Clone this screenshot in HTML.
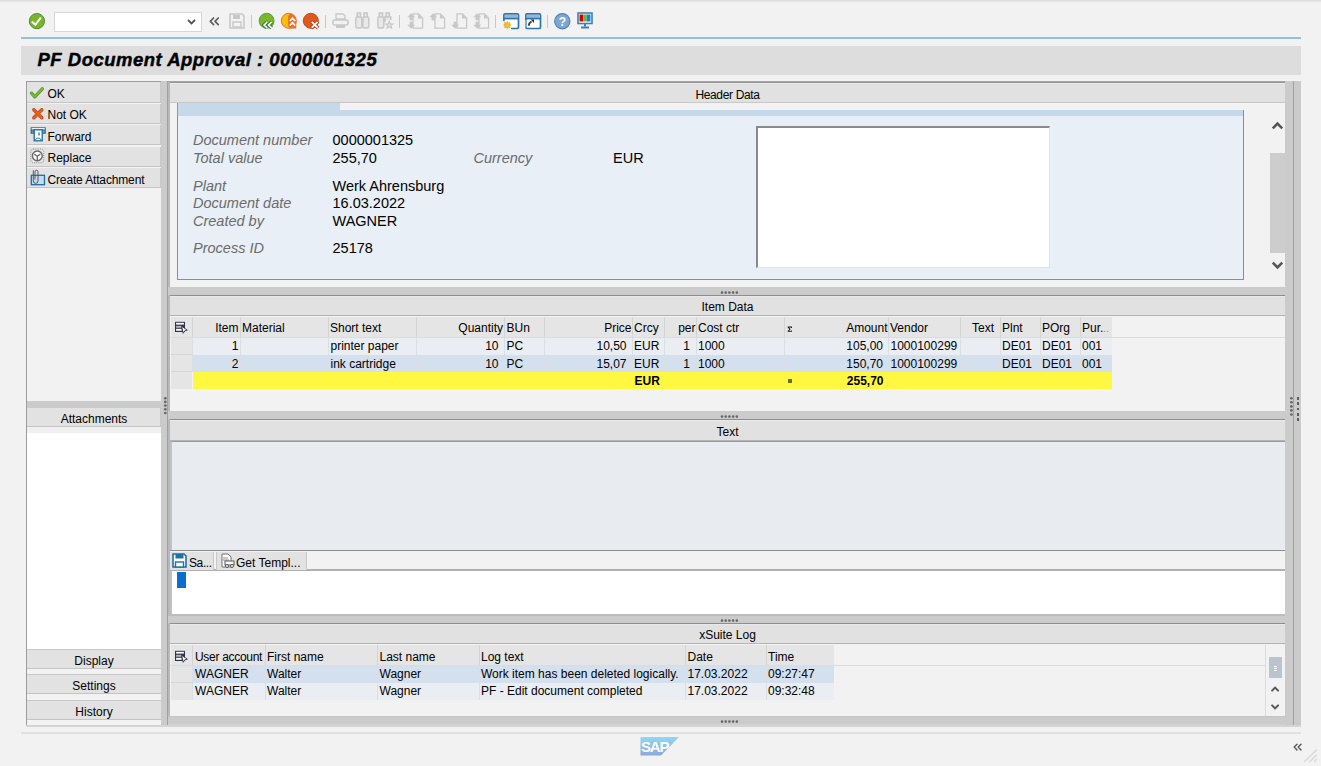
<!DOCTYPE html>
<html><head><meta charset="utf-8"><style>
html,body{margin:0;padding:0;}
body{width:1321px;height:766px;overflow:hidden;position:relative;background:#f2f2f2;font-family:"Liberation Sans",sans-serif;}
.a{position:absolute;}
.t{position:absolute;white-space:pre;}
svg{overflow:visible;}
</style></head><body>
<div class="a" style="left:0px;top:0px;width:1321px;height:1px;background:#dcdcdc;"></div>
<div class="a" style="left:0px;top:1px;width:1321px;height:2px;background:linear-gradient(#e6e6e6,#f2f2f2);"></div>
<div class="a" style="left:21px;top:37px;width:1280px;height:2px;background:#92c2e2;"></div>
<div class="a" style="left:21px;top:46px;width:1280px;height:29px;background:#dddddd;"></div>
<div class="t" style="top:51.34px;font-size:18.5px;line-height:18.5px;color:#000;font-weight:bold;font-style:italic;letter-spacing:0.5px;left:37.5px;-webkit-text-stroke:0.45px #000;">PF Document Approval : 0000001325</div>
<div class="a" style="left:26px;top:81px;width:135px;height:644px;background:#f2f2f2;border-left:1px solid #9c9c9c;border-top:1px solid #9c9c9c;box-sizing:border-box;"></div>
<div class="a" style="left:27px;top:82px;width:134px;height:21px;background:#e2e2e2;border-bottom:1px solid #c4c4c4;border-right:1px solid #c8c8c8;box-sizing:border-box;"></div>
<div class="t" style="top:87.84px;font-size:12px;line-height:12px;color:#000;left:47.5px;">OK</div>
<div class="a" style="left:27px;top:104px;width:134px;height:20px;background:#e2e2e2;border-bottom:1px solid #c4c4c4;border-right:1px solid #c8c8c8;box-sizing:border-box;"></div>
<div class="t" style="top:109.34px;font-size:12px;line-height:12px;color:#000;left:47.5px;">Not OK</div>
<div class="a" style="left:27px;top:125px;width:134px;height:20px;background:#e2e2e2;border-bottom:1px solid #c4c4c4;border-right:1px solid #c8c8c8;box-sizing:border-box;"></div>
<div class="t" style="top:130.84px;font-size:12px;line-height:12px;color:#000;left:47.5px;">Forward</div>
<div class="a" style="left:27px;top:147px;width:134px;height:20px;background:#e2e2e2;border-bottom:1px solid #c4c4c4;border-right:1px solid #c8c8c8;box-sizing:border-box;"></div>
<div class="t" style="top:152.34px;font-size:12px;line-height:12px;color:#000;left:47.5px;">Replace</div>
<div class="a" style="left:27px;top:168px;width:134px;height:20px;background:#e2e2e2;border-bottom:1px solid #c4c4c4;border-right:1px solid #c8c8c8;box-sizing:border-box;"></div>
<div class="t" style="top:173.84px;font-size:12px;line-height:12px;color:#000;letter-spacing:-0.15px;left:47.5px;">Create Attachment</div>
<div class="a" style="left:27px;top:401px;width:134px;height:7px;background:#cbcbcb;"></div>
<div class="a" style="left:27px;top:408px;width:134px;height:19px;background:#e2e2e2;border-bottom:1px solid #c4c4c4;border-right:1px solid #c8c8c8;box-sizing:border-box;"></div>
<div class="t" style="top:412.84px;font-size:12px;line-height:12px;color:#000;left:-506px;width:1200px;text-align:center;">Attachments</div>
<div class="a" style="left:27px;top:427px;width:134px;height:6px;background:#f0f0f0;"></div>
<div class="a" style="left:27px;top:433px;width:134px;height:216px;background:#ffffff;"></div>
<div class="a" style="left:27px;top:649px;width:134px;height:20px;background:#e2e2e2;border-top:1px solid #c8c8c8;border-bottom:1px solid #c4c4c4;box-sizing:border-box;"></div>
<div class="t" style="top:654.84px;font-size:12px;line-height:12px;color:#000;left:-506px;width:1200px;text-align:center;">Display</div>
<div class="a" style="left:27px;top:674px;width:134px;height:20px;background:#e2e2e2;border-top:1px solid #c8c8c8;border-bottom:1px solid #c4c4c4;box-sizing:border-box;"></div>
<div class="t" style="top:679.84px;font-size:12px;line-height:12px;color:#000;left:-506px;width:1200px;text-align:center;">Settings</div>
<div class="a" style="left:27px;top:700px;width:134px;height:20px;background:#e2e2e2;border-top:1px solid #c8c8c8;border-bottom:1px solid #c4c4c4;box-sizing:border-box;"></div>
<div class="t" style="top:705.84px;font-size:12px;line-height:12px;color:#000;left:-506px;width:1200px;text-align:center;">History</div>
<div class="a" style="left:26px;top:725px;width:135px;height:2px;background:#d4d4d4;"></div>
<div class="a" style="left:161px;top:81px;width:6px;height:645px;background:#cbcbcb;"></div>
<div class="a" style="left:167px;top:81px;width:1px;height:645px;background:#a0a0a0;"></div>
<svg class="a" style="left:163px;top:396px" width="5" height="21"><ellipse cx="2.3" cy="2.2" rx="1.35" ry="1.3" fill="#666"/><ellipse cx="2.3" cy="5.9" rx="1.35" ry="1.3" fill="#666"/><ellipse cx="2.3" cy="9.6" rx="1.35" ry="1.3" fill="#666"/><ellipse cx="2.3" cy="13.3" rx="1.35" ry="1.3" fill="#666"/><ellipse cx="2.3" cy="17.0" rx="1.35" ry="1.3" fill="#666"/></svg>
<div class="a" style="left:1285px;top:81px;width:8px;height:645px;background:#cbcbcb;"></div>
<div class="a" style="left:1293px;top:81px;width:1px;height:645px;background:#a0a0a0;"></div>
<div class="a" style="left:1294px;top:81px;width:7px;height:645px;background:#cbcbcb;"></div>
<svg class="a" style="left:1289px;top:396px" width="5" height="21"><ellipse cx="2.4" cy="2.3" rx="1.35" ry="1.3" fill="#666"/><ellipse cx="2.4" cy="6.3" rx="1.35" ry="1.3" fill="#666"/><ellipse cx="2.4" cy="10.4" rx="1.35" ry="1.3" fill="#666"/><ellipse cx="2.4" cy="14.4" rx="1.35" ry="1.3" fill="#666"/><ellipse cx="2.4" cy="18.5" rx="1.35" ry="1.3" fill="#666"/></svg>
<div class="a" style="left:1296.5px;top:397.0px;width:2.5px;height:2.5px;background:#5e5e5e;"></div>
<div class="a" style="left:1296.5px;top:402.35px;width:2.5px;height:2.5px;background:#5e5e5e;"></div>
<div class="a" style="left:1296.5px;top:407.7px;width:2.5px;height:2.5px;background:#5e5e5e;"></div>
<div class="a" style="left:1296.5px;top:413.05px;width:2.5px;height:2.5px;background:#5e5e5e;"></div>
<div class="a" style="left:1296.5px;top:418.4px;width:2.5px;height:2.5px;background:#5e5e5e;"></div>
<div class="a" style="left:168px;top:81px;width:1117px;height:206px;background:#f2f2f2;"></div>
<div class="a" style="left:168px;top:81px;width:1117px;height:1px;background:#a4a4a4;"></div>
<div class="a" style="left:168px;top:82px;width:1117px;height:1px;background:#989898;"></div>
<div class="a" style="left:168px;top:83px;width:1117px;height:1px;background:#e8e8e8;"></div>
<div class="a" style="left:168px;top:82px;width:2px;height:644px;background:#b8b8b8;"></div>
<div class="a" style="left:170px;top:84px;width:1115px;height:19px;background:#e1e1e1;border-bottom:1px solid #c8c8c8;box-sizing:border-box;"></div>
<div class="t" style="top:88.84px;font-size:12px;line-height:12px;color:#000;letter-spacing:-0.35px;left:127.5px;width:1200px;text-align:center;">Header Data</div>
<div class="a" style="left:177px;top:103px;width:1067px;height:177px;background:#e8eff7;border:1px solid #6196d4;border-top:none;box-sizing:border-box;"></div>
<div class="a" style="left:177px;top:103px;width:163px;height:13px;background:#c5d9ea;border-left:1px solid #6a9fd6;box-sizing:border-box;"></div>
<div class="a" style="left:340px;top:103px;width:904px;height:7px;background:#f2f2f2;"></div>
<div class="a" style="left:340px;top:110px;width:904px;height:6px;background:#c5d9ea;"></div>
<div class="a" style="left:1243px;top:110px;width:1px;height:170px;background:#6196d4;"></div>
<div class="t" style="top:132.73px;font-size:14.5px;line-height:14.5px;color:#6b6b6b;font-style:italic;left:193px;">Document number</div>
<div class="t" style="top:150.73px;font-size:14.5px;line-height:14.5px;color:#6b6b6b;font-style:italic;left:193px;">Total value</div>
<div class="t" style="top:178.73px;font-size:14.5px;line-height:14.5px;color:#6b6b6b;font-style:italic;left:193px;">Plant</div>
<div class="t" style="top:195.73px;font-size:14.5px;line-height:14.5px;color:#6b6b6b;font-style:italic;left:193px;">Document date</div>
<div class="t" style="top:213.73px;font-size:14.5px;line-height:14.5px;color:#6b6b6b;font-style:italic;left:193px;">Created by</div>
<div class="t" style="top:240.73px;font-size:14.5px;line-height:14.5px;color:#6b6b6b;font-style:italic;left:193px;">Process ID</div>
<div class="t" style="top:132.73px;font-size:14.5px;line-height:14.5px;color:#000;left:332.5px;">0000001325</div>
<div class="t" style="top:150.73px;font-size:14.5px;line-height:14.5px;color:#000;left:332.5px;">255,70</div>
<div class="t" style="top:178.73px;font-size:14.5px;line-height:14.5px;color:#000;left:332.5px;">Werk Ahrensburg</div>
<div class="t" style="top:195.73px;font-size:14.5px;line-height:14.5px;color:#000;left:332.5px;">16.03.2022</div>
<div class="t" style="top:213.73px;font-size:14.5px;line-height:14.5px;color:#000;left:332.5px;">WAGNER</div>
<div class="t" style="top:240.73px;font-size:14.5px;line-height:14.5px;color:#000;left:332.5px;">25178</div>
<div class="t" style="top:150.73px;font-size:14.5px;line-height:14.5px;color:#6b6b6b;font-style:italic;left:473.5px;">Currency</div>
<div class="t" style="top:150.73px;font-size:14.5px;line-height:14.5px;color:#000;left:613px;">EUR</div>
<div class="a" style="left:756px;top:126px;width:294px;height:142px;background:#ffffff;border-top:2px solid #8a8a8a;border-left:2px solid #8a8a8a;border-right:1px solid #e2e2e2;border-bottom:1px solid #e2e2e2;box-sizing:border-box;"></div>
<div class="a" style="left:1270px;top:153px;width:15px;height:100px;background:#cdcdcd;"></div>
<svg class="a" style="left:1271px;top:120px" width="13" height="10"><path d="M1.8 8.3 L6.5 3.6 L11.2 8.3" stroke="#555" stroke-width="2.6" fill="none"/></svg>
<svg class="a" style="left:1271px;top:261px" width="13" height="10"><path d="M1.8 1.7 L6.5 6.4 L11.2 1.7" stroke="#555" stroke-width="2.6" fill="none"/></svg>
<div class="a" style="left:168px;top:287px;width:1117px;height:8px;background:#cbcbcb;"></div>
<svg class="a" style="left:720px;top:291px" width="20" height="4"><ellipse cx="2.0" cy="1.6" rx="1.25" ry="1.4" fill="#666"/><ellipse cx="5.7" cy="1.6" rx="1.25" ry="1.4" fill="#666"/><ellipse cx="9.4" cy="1.6" rx="1.25" ry="1.4" fill="#666"/><ellipse cx="13.1" cy="1.6" rx="1.25" ry="1.4" fill="#666"/><ellipse cx="16.8" cy="1.6" rx="1.25" ry="1.4" fill="#666"/></svg>
<div class="a" style="left:170px;top:295px;width:1115px;height:1px;background:#8e8e8e;"></div>
<div class="a" style="left:170px;top:296px;width:1115px;height:1px;background:#e9e9e9;"></div>
<div class="a" style="left:170px;top:297px;width:1115px;height:19px;background:#e1e1e1;border-bottom:1px solid #b4b4b4;box-sizing:border-box;"></div>
<div class="t" style="top:301.34px;font-size:12px;line-height:12px;color:#000;left:127.5px;width:1200px;text-align:center;">Item Data</div>
<div class="a" style="left:170px;top:316px;width:1115px;height:95px;background:#f2f2f2;"></div>
<div class="a" style="left:171px;top:317px;width:941px;height:20px;background:#e5e5e5;"></div>
<div class="a" style="left:170px;top:337px;width:1115px;height:1px;background:#dcdcdc;"></div>
<div class="a" style="left:171px;top:338px;width:21px;height:51px;background:#e5e5e5;"></div>
<div class="a" style="left:171px;top:354px;width:21px;height:1px;background:#d6d6d6;"></div>
<div class="a" style="left:171px;top:371px;width:21px;height:1px;background:#d6d6d6;"></div>
<div class="a" style="left:193px;top:338px;width:919px;height:17px;background:#eaedf1;"></div>
<div class="a" style="left:193px;top:355px;width:919px;height:17px;background:#d5e0ef;"></div>
<div class="a" style="left:193px;top:372px;width:919px;height:17px;background:#fff740;"></div>
<div class="a" style="left:192px;top:317px;width:1px;height:20px;background:#d4d4d4;"></div>
<div class="a" style="left:192px;top:338px;width:1px;height:34px;background:#dadfe6;"></div>
<div class="a" style="left:240px;top:317px;width:1px;height:20px;background:#d4d4d4;"></div>
<div class="a" style="left:240px;top:338px;width:1px;height:34px;background:#dadfe6;"></div>
<div class="a" style="left:328px;top:317px;width:1px;height:20px;background:#d4d4d4;"></div>
<div class="a" style="left:328px;top:338px;width:1px;height:34px;background:#dadfe6;"></div>
<div class="a" style="left:416px;top:317px;width:1px;height:20px;background:#d4d4d4;"></div>
<div class="a" style="left:416px;top:338px;width:1px;height:34px;background:#dadfe6;"></div>
<div class="a" style="left:504px;top:317px;width:1px;height:20px;background:#d4d4d4;"></div>
<div class="a" style="left:504px;top:338px;width:1px;height:34px;background:#dadfe6;"></div>
<div class="a" style="left:544px;top:317px;width:1px;height:20px;background:#d4d4d4;"></div>
<div class="a" style="left:544px;top:338px;width:1px;height:34px;background:#dadfe6;"></div>
<div class="a" style="left:632px;top:317px;width:1px;height:20px;background:#d4d4d4;"></div>
<div class="a" style="left:632px;top:338px;width:1px;height:34px;background:#dadfe6;"></div>
<div class="a" style="left:664px;top:317px;width:1px;height:20px;background:#d4d4d4;"></div>
<div class="a" style="left:664px;top:338px;width:1px;height:34px;background:#dadfe6;"></div>
<div class="a" style="left:696px;top:317px;width:1px;height:20px;background:#d4d4d4;"></div>
<div class="a" style="left:696px;top:338px;width:1px;height:34px;background:#dadfe6;"></div>
<div class="a" style="left:784px;top:317px;width:1px;height:20px;background:#d4d4d4;"></div>
<div class="a" style="left:784px;top:338px;width:1px;height:34px;background:#dadfe6;"></div>
<div class="a" style="left:888px;top:317px;width:1px;height:20px;background:#d4d4d4;"></div>
<div class="a" style="left:888px;top:338px;width:1px;height:34px;background:#dadfe6;"></div>
<div class="a" style="left:960px;top:317px;width:1px;height:20px;background:#d4d4d4;"></div>
<div class="a" style="left:960px;top:338px;width:1px;height:34px;background:#dadfe6;"></div>
<div class="a" style="left:1000px;top:317px;width:1px;height:20px;background:#d4d4d4;"></div>
<div class="a" style="left:1000px;top:338px;width:1px;height:34px;background:#dadfe6;"></div>
<div class="a" style="left:1040px;top:317px;width:1px;height:20px;background:#d4d4d4;"></div>
<div class="a" style="left:1040px;top:338px;width:1px;height:34px;background:#dadfe6;"></div>
<div class="a" style="left:1080px;top:317px;width:1px;height:20px;background:#d4d4d4;"></div>
<div class="a" style="left:1080px;top:338px;width:1px;height:34px;background:#dadfe6;"></div>
<div class="t" style="top:322.14px;font-size:12px;line-height:12px;color:#000;left:-361.5px;width:600px;text-align:right;">Item</div>
<div class="t" style="top:322.14px;font-size:12px;line-height:12px;color:#000;left:242px;">Material</div>
<div class="t" style="top:322.14px;font-size:12px;line-height:12px;color:#000;left:330px;">Short text</div>
<div class="t" style="top:322.14px;font-size:12px;line-height:12px;color:#000;left:-97.0px;width:600px;text-align:right;">Quantity</div>
<div class="t" style="top:322.14px;font-size:12px;line-height:12px;color:#000;left:506.5px;">BUn</div>
<div class="t" style="top:322.14px;font-size:12px;line-height:12px;color:#000;left:31.5px;width:600px;text-align:right;">Price</div>
<div class="t" style="top:322.14px;font-size:12px;line-height:12px;color:#000;left:634px;">Crcy</div>
<div class="t" style="top:322.14px;font-size:12px;line-height:12px;color:#000;left:95.5px;width:600px;text-align:right;">per</div>
<div class="t" style="top:322.14px;font-size:12px;line-height:12px;color:#000;left:698px;">Cost ctr</div>
<div class="t" style="top:322.14px;font-size:12px;line-height:12px;color:#000;left:287.5px;width:600px;text-align:right;">Amount</div>
<div class="t" style="top:322.14px;font-size:12px;line-height:12px;color:#000;left:890px;">Vendor</div>
<div class="t" style="top:322.14px;font-size:12px;line-height:12px;color:#000;left:394.0px;width:600px;text-align:right;">Text</div>
<div class="t" style="top:322.14px;font-size:12px;line-height:12px;color:#000;left:1002px;">Plnt</div>
<div class="t" style="top:322.14px;font-size:12px;line-height:12px;color:#000;left:1042px;">POrg</div>
<div class="t" style="top:322.14px;font-size:12px;line-height:12px;color:#000;left:1082px;">Pur.<span style="color:#8a8a8a;font-size:10px">..</span></div>
<svg class="a" style="left:787px;top:325.5px" width="6" height="7"><path d="M0.6 0.5 H5 V1.9 H4 V1.4 H2.2 L3.6 3.2 L2.2 4.9 H4 V4.4 H5 V5.8 H0.6 V5 L2.3 3.2 L0.6 1.3 Z" fill="#1a1a1a"/></svg>
<div class="t" style="top:340.34px;font-size:12px;line-height:12px;color:#000;left:-361.5px;width:600px;text-align:right;">1</div>
<div class="t" style="top:340.34px;font-size:12px;line-height:12px;color:#000;left:330.5px;">printer paper</div>
<div class="t" style="top:340.34px;font-size:12px;line-height:12px;color:#000;left:-101.5px;width:600px;text-align:right;">10</div>
<div class="t" style="top:340.34px;font-size:12px;line-height:12px;color:#000;left:506.5px;">PC</div>
<div class="t" style="top:340.34px;font-size:12px;line-height:12px;color:#000;left:26.5px;width:600px;text-align:right;">10,50</div>
<div class="t" style="top:340.34px;font-size:12px;line-height:12px;color:#000;left:634px;">EUR</div>
<div class="t" style="top:340.34px;font-size:12px;line-height:12px;color:#000;left:90.0px;width:600px;text-align:right;">1</div>
<div class="t" style="top:340.34px;font-size:12px;line-height:12px;color:#000;left:698px;">1000</div>
<div class="t" style="top:340.34px;font-size:12px;line-height:12px;color:#000;left:283.0px;width:600px;text-align:right;">105,00</div>
<div class="t" style="top:340.34px;font-size:12px;line-height:12px;color:#000;left:890.5px;">1000100299</div>
<div class="t" style="top:340.34px;font-size:12px;line-height:12px;color:#000;left:1002px;">DE01</div>
<div class="t" style="top:340.34px;font-size:12px;line-height:12px;color:#000;left:1042px;">DE01</div>
<div class="t" style="top:340.34px;font-size:12px;line-height:12px;color:#000;left:1082px;">001</div>
<div class="t" style="top:357.84px;font-size:12px;line-height:12px;color:#000;left:-361.5px;width:600px;text-align:right;">2</div>
<div class="t" style="top:357.84px;font-size:12px;line-height:12px;color:#000;left:330.5px;">ink cartridge</div>
<div class="t" style="top:357.84px;font-size:12px;line-height:12px;color:#000;left:-101.5px;width:600px;text-align:right;">10</div>
<div class="t" style="top:357.84px;font-size:12px;line-height:12px;color:#000;left:506.5px;">PC</div>
<div class="t" style="top:357.84px;font-size:12px;line-height:12px;color:#000;left:26.5px;width:600px;text-align:right;">15,07</div>
<div class="t" style="top:357.84px;font-size:12px;line-height:12px;color:#000;left:634px;">EUR</div>
<div class="t" style="top:357.84px;font-size:12px;line-height:12px;color:#000;left:90.0px;width:600px;text-align:right;">1</div>
<div class="t" style="top:357.84px;font-size:12px;line-height:12px;color:#000;left:698px;">1000</div>
<div class="t" style="top:357.84px;font-size:12px;line-height:12px;color:#000;left:283.0px;width:600px;text-align:right;">150,70</div>
<div class="t" style="top:357.84px;font-size:12px;line-height:12px;color:#000;left:890.5px;">1000100299</div>
<div class="t" style="top:357.84px;font-size:12px;line-height:12px;color:#000;left:1002px;">DE01</div>
<div class="t" style="top:357.84px;font-size:12px;line-height:12px;color:#000;left:1042px;">DE01</div>
<div class="t" style="top:357.84px;font-size:12px;line-height:12px;color:#000;left:1082px;">001</div>
<div class="t" style="top:375.34px;font-size:12px;line-height:12px;color:#000;font-weight:bold;left:634.5px;">EUR</div>
<div class="t" style="top:375.34px;font-size:12px;line-height:12px;color:#000;font-weight:bold;left:283.5px;width:600px;text-align:right;">255,70</div>
<div class="a" style="left:788px;top:379px;width:4px;height:4px;background:#6b6a20;"></div>
<svg class="a" style="left:175px;top:321px" width="14" height="13"><rect x="0" y="0.8" width="10" height="10.2" fill="#30304e"/><rect x="1.1" y="1.8" width="7.8" height="1.8" fill="#fff"/><rect x="1.1" y="4.8" width="5.5" height="2" fill="#b4b4b8"/><rect x="1.1" y="7.8" width="5.5" height="2" fill="#fff"/><path d="M6.6 5.2 L12.3 9.2 L9.6 9.9 L8.2 12.3 Z" fill="#fff" stroke="#30304e" stroke-width="0.9" stroke-linejoin="round"/></svg>
<div class="a" style="left:168px;top:411px;width:1117px;height:8px;background:#cbcbcb;"></div>
<svg class="a" style="left:720px;top:415px" width="20" height="4"><ellipse cx="2.0" cy="1.6" rx="1.25" ry="1.4" fill="#666"/><ellipse cx="5.7" cy="1.6" rx="1.25" ry="1.4" fill="#666"/><ellipse cx="9.4" cy="1.6" rx="1.25" ry="1.4" fill="#666"/><ellipse cx="13.1" cy="1.6" rx="1.25" ry="1.4" fill="#666"/><ellipse cx="16.8" cy="1.6" rx="1.25" ry="1.4" fill="#666"/></svg>
<div class="a" style="left:170px;top:419px;width:1115px;height:1px;background:#8e8e8e;"></div>
<div class="a" style="left:170px;top:420px;width:1115px;height:1px;background:#e9e9e9;"></div>
<div class="a" style="left:170px;top:421px;width:1115px;height:20px;background:#e1e1e1;border-bottom:1px solid #b4b4b4;box-sizing:border-box;"></div>
<div class="t" style="top:425.54px;font-size:12px;line-height:12px;color:#000;left:127.5px;width:1200px;text-align:center;">Text</div>
<div class="a" style="left:170px;top:441px;width:1115px;height:110px;background:#e8ebef;border-left:2px solid #c2c2c2;border-top:1px solid #9a9a9a;box-sizing:border-box;"></div>
<div class="a" style="left:170px;top:550px;width:1115px;height:1px;background:#8c8c8c;"></div>
<div class="a" style="left:170px;top:551px;width:1115px;height:20px;background:#f2f2f2;border-bottom:2px solid #b0b0b0;box-sizing:border-box;"></div>
<div class="a" style="left:170px;top:552px;width:44px;height:18px;background:#e2e2e2;border-right:1px solid #c8c8c8;box-sizing:border-box;"></div>
<div class="a" style="left:216px;top:552px;width:91px;height:18px;background:#e2e2e2;border-right:1px solid #c8c8c8;border-left:1px solid #c8c8c8;box-sizing:border-box;"></div>
<div class="t" style="top:556.84px;font-size:12px;line-height:12px;color:#000;letter-spacing:-0.4px;left:189px;">Sa...</div>
<div class="t" style="top:556.84px;font-size:12px;line-height:12px;color:#000;left:236px;">Get Templ...</div>
<svg class="a" style="left:172px;top:553px" width="15" height="15"><path d="M1 1H12L14 3V14H1Z" fill="#fff" stroke="#1f6fa8" stroke-width="1.6"/><rect x="3.5" y="1" width="8" height="4.5" fill="#1f6fa8"/><rect x="3.5" y="9" width="8" height="5" fill="#fff" stroke="#1f6fa8" stroke-width="1.4"/></svg>
<svg class="a" style="left:220px;top:553px" width="15" height="15"><path d="M2 1H8L11 4V14H2Z" fill="#fff" stroke="#707070" stroke-width="1"/><path d="M3 5H8M3 7H9" stroke="#909090"/><rect x="5" y="8" width="9" height="4" fill="#fff" stroke="#555" stroke-width="1"/><circle cx="7" cy="13" r="1.5" fill="#fff" stroke="#555"/><circle cx="12" cy="13" r="1.5" fill="#fff" stroke="#555"/></svg>
<div class="a" style="left:170px;top:571px;width:1115px;height:44px;background:#ffffff;border-left:2px solid #c2c2c2;box-sizing:border-box;"></div>
<div class="a" style="left:177px;top:572px;width:9px;height:16px;background:#0a6ed1;"></div>
<div class="a" style="left:168px;top:615px;width:1117px;height:8px;background:#cbcbcb;"></div>
<svg class="a" style="left:720px;top:619px" width="20" height="4"><ellipse cx="2.0" cy="1.6" rx="1.25" ry="1.4" fill="#666"/><ellipse cx="5.7" cy="1.6" rx="1.25" ry="1.4" fill="#666"/><ellipse cx="9.4" cy="1.6" rx="1.25" ry="1.4" fill="#666"/><ellipse cx="13.1" cy="1.6" rx="1.25" ry="1.4" fill="#666"/><ellipse cx="16.8" cy="1.6" rx="1.25" ry="1.4" fill="#666"/></svg>
<div class="a" style="left:168px;top:614px;width:1117px;height:2px;background:#bcbcbc;"></div>
<div class="a" style="left:170px;top:623px;width:1115px;height:1px;background:#8e8e8e;"></div>
<div class="a" style="left:170px;top:624px;width:1115px;height:1px;background:#e9e9e9;"></div>
<div class="a" style="left:170px;top:625px;width:1115px;height:19px;background:#e1e1e1;border-bottom:1px solid #b4b4b4;box-sizing:border-box;"></div>
<div class="t" style="top:629.44px;font-size:12px;line-height:12px;color:#000;left:127.5px;width:1200px;text-align:center;">xSuite Log</div>
<div class="a" style="left:170px;top:644px;width:1115px;height:72px;background:#f2f2f2;"></div>
<div class="a" style="left:171px;top:645px;width:663px;height:20px;background:#e5e5e5;"></div>
<div class="a" style="left:170px;top:665px;width:1095px;height:1px;background:#dcdcdc;"></div>
<div class="a" style="left:171px;top:666px;width:21px;height:34px;background:#e5e5e5;"></div>
<div class="a" style="left:171px;top:682px;width:21px;height:1px;background:#d6d6d6;"></div>
<div class="a" style="left:193px;top:666px;width:641px;height:17px;background:#d5e0ef;"></div>
<div class="a" style="left:193px;top:683px;width:641px;height:17px;background:#eaedf1;"></div>
<div class="a" style="left:192px;top:645px;width:1px;height:20px;background:#d4d4d4;"></div>
<div class="a" style="left:192px;top:666px;width:1px;height:34px;background:#dadfe6;"></div>
<div class="a" style="left:265px;top:645px;width:1px;height:20px;background:#d4d4d4;"></div>
<div class="a" style="left:265px;top:666px;width:1px;height:34px;background:#dadfe6;"></div>
<div class="a" style="left:377px;top:645px;width:1px;height:20px;background:#d4d4d4;"></div>
<div class="a" style="left:377px;top:666px;width:1px;height:34px;background:#dadfe6;"></div>
<div class="a" style="left:479px;top:645px;width:1px;height:20px;background:#d4d4d4;"></div>
<div class="a" style="left:479px;top:666px;width:1px;height:34px;background:#dadfe6;"></div>
<div class="a" style="left:685px;top:645px;width:1px;height:20px;background:#d4d4d4;"></div>
<div class="a" style="left:685px;top:666px;width:1px;height:34px;background:#dadfe6;"></div>
<div class="a" style="left:766px;top:645px;width:1px;height:20px;background:#d4d4d4;"></div>
<div class="a" style="left:766px;top:666px;width:1px;height:34px;background:#dadfe6;"></div>
<svg class="a" style="left:175px;top:650px" width="14" height="13"><rect x="0" y="0.8" width="10" height="10.2" fill="#30304e"/><rect x="1.1" y="1.8" width="7.8" height="1.8" fill="#fff"/><rect x="1.1" y="4.8" width="5.5" height="2" fill="#b4b4b8"/><rect x="1.1" y="7.8" width="5.5" height="2" fill="#fff"/><path d="M6.6 5.2 L12.3 9.2 L9.6 9.9 L8.2 12.3 Z" fill="#fff" stroke="#30304e" stroke-width="0.9" stroke-linejoin="round"/></svg>
<div class="t" style="top:650.84px;font-size:12px;line-height:12px;color:#000;letter-spacing:-0.3px;left:195px;">User account</div>
<div class="t" style="top:650.84px;font-size:12px;line-height:12px;color:#000;left:267px;">First name</div>
<div class="t" style="top:650.84px;font-size:12px;line-height:12px;color:#000;left:379.5px;">Last name</div>
<div class="t" style="top:650.84px;font-size:12px;line-height:12px;color:#000;left:481px;">Log text</div>
<div class="t" style="top:650.84px;font-size:12px;line-height:12px;color:#000;left:687.5px;">Date</div>
<div class="t" style="top:650.84px;font-size:12px;line-height:12px;color:#000;left:768px;">Time</div>
<div class="t" style="top:668.34px;font-size:12px;line-height:12px;color:#000;left:195px;">WAGNER</div>
<div class="t" style="top:668.34px;font-size:12px;line-height:12px;color:#000;left:267px;">Walter</div>
<div class="t" style="top:668.34px;font-size:12px;line-height:12px;color:#000;left:379.5px;">Wagner</div>
<div class="t" style="top:668.34px;font-size:12px;line-height:12px;color:#000;left:481px;">Work item has been deleted logically.</div>
<div class="t" style="top:668.34px;font-size:12px;line-height:12px;color:#000;left:687.5px;">17.03.2022</div>
<div class="t" style="top:668.34px;font-size:12px;line-height:12px;color:#000;left:768px;">09:27:47</div>
<div class="t" style="top:685.34px;font-size:12px;line-height:12px;color:#000;left:195px;">WAGNER</div>
<div class="t" style="top:685.34px;font-size:12px;line-height:12px;color:#000;left:267px;">Walter</div>
<div class="t" style="top:685.34px;font-size:12px;line-height:12px;color:#000;left:379.5px;">Wagner</div>
<div class="t" style="top:685.34px;font-size:12px;line-height:12px;color:#000;left:481px;">PF - Edit document completed</div>
<div class="t" style="top:685.34px;font-size:12px;line-height:12px;color:#000;left:687.5px;">17.03.2022</div>
<div class="t" style="top:685.34px;font-size:12px;line-height:12px;color:#000;left:768px;">09:32:48</div>
<div class="a" style="left:1265px;top:645px;width:1px;height:71px;background:#dcdcdc;"></div>
<div class="a" style="left:1269px;top:657px;width:13px;height:21px;background:#b8c4d0;"></div>
<div class="a" style="left:1274px;top:666px;width:2.7000000000000455px;height:1px;background:#fff;"></div>
<div class="a" style="left:1274px;top:668px;width:2.7000000000000455px;height:1px;background:#fff;"></div>
<div class="a" style="left:1274px;top:670px;width:2.7000000000000455px;height:1px;background:#fff;"></div>
<svg class="a" style="left:1271px;top:686.3px" width="9" height="6"><path d="M1.1 4.6 L4.1 1.6 L7.1 4.6" stroke="#555" stroke-width="2" fill="none" stroke-linecap="round"/></svg>
<svg class="a" style="left:1271px;top:704.3px" width="9" height="6"><path d="M1.1 1.4 L4.1 4.4 L7.1 1.4" stroke="#555" stroke-width="2" fill="none" stroke-linecap="round"/></svg>
<div class="a" style="left:168px;top:716px;width:1117px;height:8px;background:#cbcbcb;"></div>
<svg class="a" style="left:720px;top:720px" width="20" height="4"><ellipse cx="2.0" cy="1.6" rx="1.25" ry="1.4" fill="#666"/><ellipse cx="5.7" cy="1.6" rx="1.25" ry="1.4" fill="#666"/><ellipse cx="9.4" cy="1.6" rx="1.25" ry="1.4" fill="#666"/><ellipse cx="13.1" cy="1.6" rx="1.25" ry="1.4" fill="#666"/><ellipse cx="16.8" cy="1.6" rx="1.25" ry="1.4" fill="#666"/></svg>
<div class="a" style="left:168px;top:724px;width:1117px;height:1px;background:#d0d0d0;"></div>
<div class="a" style="left:26px;top:725px;width:1275px;height:2px;background:#d4d4d4;"></div>
<div class="a" style="left:168px;top:716px;width:1117px;height:1px;background:#c4c4c4;"></div>
<div class="a" style="left:21px;top:732px;width:1280px;height:2px;background:#e0e0e0;"></div>
<svg class="a" style="left:640px;top:737px" width="40" height="19"><defs><linearGradient id="sg" x1="0" y1="0" x2="0" y2="1"><stop offset="0" stop-color="#8fd8f2"/><stop offset="1" stop-color="#8aa9dc"/></linearGradient></defs><path d="M0.5 0H39L21 18.5H0.5Z" fill="url(#sg)"/><text x="1" y="15" font-family="Liberation Sans" font-weight="bold" font-size="15" fill="#fff" letter-spacing="-1.2">SAP</text></svg>
<svg class="a" style="left:1292.5px;top:742.5px" width="10" height="9"><path d="M4 1.2 L1.2 4 L4 6.9 M8 1.2 L5.2 4 L8 6.9" stroke="#5a5a5a" stroke-width="1.5" fill="none" stroke-linecap="round" stroke-linejoin="round"/></svg>
<svg class="a" style="left:1303px;top:749px" width="15" height="14"><path d="M13.5 1L1.5 12.5M13.5 6L6.8 12.5M13.5 10.5L11.5 12.5" stroke="#d8d8d8" stroke-width="1.4" stroke-linecap="round"/></svg>
<svg class="a" style="left:29px;top:13px" width="17" height="17"><circle cx="7.9" cy="8.1" r="7.6" fill="#79b52b" stroke="#4f8c3c" stroke-width="1"/><path d="M2.8 8.6 L6.3 11.8 L11.8 4.6" stroke="#fff" stroke-width="2" fill="none"/></svg>
<div class="a" style="left:54px;top:12px;width:148px;height:20px;background:#ffffff;border:1px solid #d6d6d6;box-sizing:border-box;"></div>
<svg class="a" style="left:187px;top:19px" width="9" height="6"><path d="M1 1 L4.5 4.5 L8 1" stroke="#555" stroke-width="1.8" fill="none"/></svg>
<svg class="a" style="left:209px;top:16.5px" width="11" height="9"><path d="M4.6 1 L1.3 4.3 L4.6 7.6 M9.3 1 L6 4.3 L9.3 7.6" stroke="#5e5e5e" stroke-width="1.7" fill="none" stroke-linecap="round" stroke-linejoin="round"/></svg>
<svg class="a" style="left:229px;top:13px" width="16" height="16"><path d="M1 1H13L15 3V15H1Z" fill="none" stroke="#c8c8c8" stroke-width="1.6"/><rect x="4" y="2" width="7" height="4" fill="#c8c8c8"/><rect x="4" y="9" width="8" height="5" fill="none" stroke="#c8c8c8" stroke-width="1.4"/></svg>
<div class="a" style="left:251px;top:15px;width:1px;height:13px;background:#c8c8c8;"></div>
<svg class="a" style="left:259px;top:13px" width="17" height="17"><circle cx="7.6" cy="7.8" r="7.5" fill="#7ab829" stroke="#4f8c3c" stroke-width="0.8"/><path d="M8.2 9 L5.2 12 L8.2 15 M12.6 9 L9.6 12 L12.6 15" stroke="#3f7f3a" stroke-width="3.8" fill="none"/><path d="M8.2 9 L5.2 12 L8.2 15 M12.6 9 L9.6 12 L12.6 15" stroke="#fff" stroke-width="1.7" fill="none"/></svg>
<svg class="a" style="left:281px;top:13px" width="17" height="17"><circle cx="7.8" cy="7.8" r="7.5" fill="#f9bf0a" stroke="#e8742a" stroke-width="1"/><path d="M9.3 0.5 A7.5 7.5 0 0 1 15.3 7.8 V15.5 H8.6 A2.2 7.6 0 0 1 9.3 0.5Z" fill="#e8742a"/><path d="M8.8 8 L11.5 5.3 L14.2 8 M8.8 12.5 L11.5 9.8 L14.2 12.5" stroke="#fff" stroke-width="1.7" fill="none"/></svg>
<svg class="a" style="left:303px;top:13px" width="17" height="17"><circle cx="7.8" cy="7.8" r="7.5" fill="#df5a1e" stroke="#c84a1a" stroke-width="1"/><path d="M8.5 8.5 L15 15 M15 8.5 L8.5 15" stroke="#b83a14" stroke-width="3.6" fill="none"/><path d="M8.8 8.8 L14.6 14.6 M14.6 8.8 L8.8 14.6" stroke="#fff" stroke-width="1.9" fill="none"/></svg>
<div class="a" style="left:325px;top:15px;width:1px;height:13px;background:#c8c8c8;"></div>
<svg class="a" style="left:332px;top:13px" width="17" height="16"><path d="M4 1H11L13 3V6H4Z" fill="none" stroke="#c8c8c8" stroke-width="1.3"/><rect x="1" y="7" width="15" height="5" rx="1.5" fill="none" stroke="#c8c8c8" stroke-width="1.6"/><rect x="4" y="12" width="9" height="3" fill="#c8c8c8"/></svg>
<svg class="a" style="left:355px;top:12px" width="15" height="17"><g fill="#e8e8e8" stroke="#c8c8c8" stroke-width="1.5"><rect x="2.2" y="1" width="3.3" height="4.2"/><rect x="9" y="1" width="3.3" height="4.2"/><rect x="0.8" y="5" width="6" height="11" rx="1.5"/><rect x="7.8" y="5" width="6" height="11" rx="1.5"/></g><rect x="6" y="7" width="2.6" height="3" fill="#c8c8c8"/></svg>
<svg class="a" style="left:377px;top:12px" width="17" height="17"><g fill="#e8e8e8" stroke="#c8c8c8" stroke-width="1.5"><rect x="2.2" y="1" width="3.3" height="4.2"/><rect x="9" y="1" width="3.3" height="4.2"/><rect x="0.8" y="5" width="6" height="11" rx="1.5"/><path d="M7.8 9V5H13.8V8"/></g><rect x="6" y="7" width="2.6" height="3" fill="#c8c8c8"/><path d="M12.3 9.5 L13.3 11.8 L15.8 12 L13.9 13.6 L14.5 16 L12.3 14.7 L10.1 16 L10.7 13.6 L8.8 12 L11.3 11.8Z" fill="#e8e8e8" stroke="#c8c8c8" stroke-width="1.3"/></svg>
<div class="a" style="left:399px;top:15px;width:1px;height:13px;background:#c8c8c8;"></div>
<svg class="a" style="left:406.5px;top:12.5px" width="17" height="17"><path d="M6 0.8H11.5L15.6 4.9V15.2H6Z" fill="none" stroke="#c8c8c8" stroke-width="1.3"/><path d="M11 0.8V5.4H15.6Z" fill="#c8c8c8"/><path d="M4.2 0.3 L8.2 4.3 H5.8 V7.3 H2.6 V4.3 H0.2 ZM4.2 15.7 L8.2 11.7 H5.8 V8.7 H2.6 V11.7 H0.2 Z" fill="#c8c8c8"/></svg>
<svg class="a" style="left:428.5px;top:12.5px" width="17" height="17"><path d="M6 0.8H11.5L15.6 4.9V15.2H6Z" fill="none" stroke="#c8c8c8" stroke-width="1.3"/><path d="M11 0.8V5.4H15.6Z" fill="#c8c8c8"/><path d="M4.2 0.3 L8.2 4.3 H5.8 V7.3 H2.6 V4.3 H0.2 Z" fill="#c8c8c8"/></svg>
<svg class="a" style="left:450.5px;top:12.5px" width="17" height="17"><path d="M6 0.8H11.5L15.6 4.9V15.2H6Z" fill="none" stroke="#c8c8c8" stroke-width="1.3"/><path d="M11 0.8V5.4H15.6Z" fill="#c8c8c8"/><path d="M4.2 15.7 L8.2 11.7 H5.8 V8.7 H2.6 V11.7 H0.2 Z" fill="#c8c8c8"/></svg>
<svg class="a" style="left:472.5px;top:12.5px" width="17" height="17"><path d="M6 0.8H11.5L15.6 4.9V15.2H6Z" fill="none" stroke="#c8c8c8" stroke-width="1.3"/><path d="M11 0.8V5.4H15.6Z" fill="#c8c8c8"/><path d="M4.2 0.3 L8.2 4.3 H5.8 V7.3 H2.6 V4.3 H0.2 ZM4.2 15.7 L8.2 11.7 H5.8 V8.7 H2.6 V11.7 H0.2 Z" fill="#c8c8c8"/></svg>
<div class="a" style="left:495px;top:15px;width:1px;height:13px;background:#c8c8c8;"></div>
<svg class="a" style="left:502.5px;top:12.5px" width="17" height="17"><rect x="0.9" y="0.9" width="14.6" height="14.6" rx="1.2" fill="#fff" stroke="#2e74a6" stroke-width="1.7"/><rect x="1.8" y="1.8" width="12.8" height="3.2" fill="#95b6da"/><rect x="0.9" y="4.8" width="14.6" height="1.6" fill="#2e74a6"/><rect x="0" y="8" width="1.8" height="9" fill="#f2f2f2"/><rect x="0" y="14.5" width="8" height="2.5" fill="#f2f2f2"/><polygon points="8.60,12.00 6.52,12.92 7.34,15.04 5.22,14.22 4.30,16.30 3.38,14.22 1.26,15.04 2.08,12.92 0.00,12.00 2.08,11.08 1.26,8.96 3.38,9.78 4.30,7.70 5.22,9.78 7.34,8.96 6.52,11.08" fill="#f39a12"/><circle cx="4.3" cy="12" r="2.2" fill="#fcc400"/></svg>
<svg class="a" style="left:524.5px;top:12.5px" width="17" height="17"><rect x="0.9" y="0.9" width="14.6" height="14.6" rx="1.2" fill="#fff" stroke="#2e74a6" stroke-width="1.7"/><rect x="1.8" y="1.8" width="12.8" height="3.2" fill="#95b6da"/><rect x="0.9" y="4.8" width="14.6" height="1.6" fill="#2e74a6"/><rect x="0.1" y="7" width="1.6" height="7.5" fill="#8cb6d2"/><path d="M3.8 12.8 Q3.8 9.6 6.6 8.6" stroke="#444" stroke-width="1.8" fill="none"/><path d="M5.6 6.6 H9 V10 Z" fill="#333"/></svg>
<div class="a" style="left:547px;top:15px;width:1px;height:13px;background:#c8c8c8;"></div>
<svg class="a" style="left:554px;top:13px" width="17" height="17"><circle cx="8.3" cy="8.3" r="7.6" fill="#7ea7d0" stroke="#4a84bb" stroke-width="1.2"/><text x="8.3" y="13" text-anchor="middle" font-family="Liberation Sans" font-weight="bold" font-size="12" fill="#fff">?</text></svg>
<svg class="a" style="left:577px;top:12px" width="16" height="17"><rect x="1" y="1" width="14" height="10.5" fill="#fff" stroke="#3d7fb5" stroke-width="1.6"/><rect x="2.5" y="2.5" width="3.7" height="7" fill="#d40000"/><rect x="6.2" y="2.5" width="3.6" height="7" fill="#6cb33e"/><rect x="9.8" y="2.5" width="3.7" height="7" fill="#1a7fd0"/><rect x="7" y="12" width="2" height="2.5" fill="#3d7fb5"/><rect x="4" y="14.5" width="8" height="2" fill="#3d7fb5"/></svg>
<svg class="a" style="left:30.3px;top:86.5px" width="14" height="12"><path d="M1.5 6.2 L4.8 9.8 L12.3 1.8" stroke="#4f8c3c" stroke-width="3.2" fill="none" stroke-linecap="round" stroke-linejoin="round"/><path d="M1.5 6.2 L4.8 9.8 L12.3 1.8" stroke="#7ab829" stroke-width="2" fill="none" stroke-linecap="round" stroke-linejoin="round"/></svg>
<svg class="a" style="left:31.5px;top:107.5px" width="12" height="12"><path d="M1.8 1.8 L9.8 9.8 M9.8 1.8 L1.8 9.8" stroke="#c8441a" stroke-width="3.4" fill="none" stroke-linecap="round"/><path d="M1.8 1.8 L9.8 9.8 M9.8 1.8 L1.8 9.8" stroke="#e4601f" stroke-width="2.2" fill="none" stroke-linecap="round"/></svg>
<svg class="a" style="left:30px;top:127px" width="17" height="15"><rect x="0.6" y="0.3" width="15.2" height="6.5" fill="#1a6ea5"/><rect x="1.6" y="1.1" width="13.2" height="1.3" fill="#fff"/><rect x="1.8" y="3.2" width="1.8" height="2.8" fill="#8a8a8a"/><rect x="12.8" y="3.2" width="1.8" height="2.8" fill="#8a8a8a"/><rect x="4.2" y="2.8" width="8" height="11" fill="#fff" stroke="#1a6ea5" stroke-width="1.3"/><path d="M9 5.5 V8.5" stroke="#1a6ea5" stroke-width="1.3"/><path d="M5.5 13 C6 10.5 10.5 10.5 11 13" stroke="#1a6ea5" stroke-width="1" fill="none"/></svg>
<svg class="a" style="left:30px;top:148px" width="15" height="16"><rect x="0.8" y="1" width="13" height="13.8" rx="2.5" fill="none" stroke="#777" stroke-width="0.9" stroke-dasharray="0.9 1.3"/><circle cx="7.3" cy="7.9" r="4.9" fill="#fff" stroke="#666" stroke-width="1.4"/><path d="M4.3 6.3 L7.3 8.3 L10.3 6.3 M7.3 8.3 V12.6" stroke="#666" stroke-width="1.3" fill="none"/></svg>
<svg class="a" style="left:30px;top:169px" width="16" height="17"><rect x="1.3" y="6.3" width="13.2" height="9.4" fill="#c5dcf0" stroke="#1a6ea5" stroke-width="1.3"/><path d="M3.3 1.2 V12 A2.3 2.3 0 0 0 8 12 V2.8 A1.5 1.5 0 0 0 5 2.8 V10.5" stroke="#5a5a5a" stroke-width="1" fill="none" transform="translate(0,0)"/></svg>
</body></html>
